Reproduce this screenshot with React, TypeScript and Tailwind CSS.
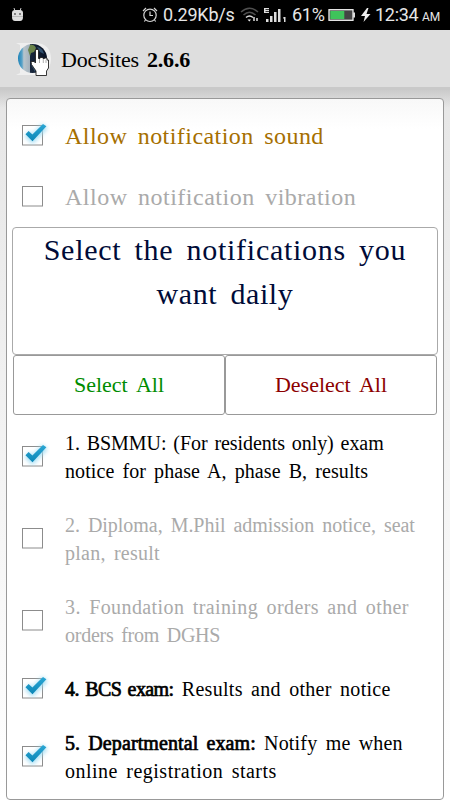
import React from 'react';

function Check({ on }: { on?: boolean }) {
  return (
    <svg className="-my-1 ml-[11px] h-[32px] w-[32px] shrink-0" viewBox="0 0 32 32">
      <defs>
        <linearGradient id="tick" x1="0" y1="0" x2="0" y2="1">
          <stop offset="0" stopColor="#2aa7d5" />
          <stop offset="1" stopColor="#0c86b6" />
        </linearGradient>
        <filter id="glow" x="-40%" y="-40%" width="180%" height="180%">
          <feGaussianBlur stdDeviation="2" />
        </filter>
      </defs>
      <rect x="4.5" y="5.500" width="20" height="19.500" fill="#fff" stroke="#8c8c8c" />
      {on && (
        <>
          <path d="M9 13.5 14.5 19 27 6" fill="none" stroke="#9edcf3" strokeWidth="7" filter="url(#glow)" opacity=".9" />
          <path d="M7.5 14.2 10.6 11 14.4 14.600 25 4 28.400 6.200 14.5 21.2Z" fill="url(#tick)" />
        </>
      )}
    </svg>
  );
}

function Row({ on, className, children }: { on?: boolean; className: string; children: React.ReactNode }) {
  return (
    <div className={`flex shrink-0 items-center ${className}`}>
      <Check on={on} />
      <div className="ml-[15px] flex flex-col whitespace-nowrap">{children}</div>
    </div>
  );
}

function StatusBar() {
  return (
    <div className="flex h-[30px] shrink-0 items-center bg-black font-[Roboto,sans-serif] text-[18px] leading-[30px] text-[#e6e6e6]">
      <svg className="ml-[11px] h-[16px] w-[13px]" viewBox="0 0 13 16">
        <path d="M3 1 4 4M10 1 9 4" stroke="#ccc" strokeWidth="1" />
        <path d="M1 6Q1 3 4 3H9Q12 3 12 6V10Q12 14 9 14H4Q1 14 1 10Z" fill="#ddd" />
        <path d="M1 9.5H12" stroke="#bbb" />
        <circle cx="4" cy="7" r=".9" fill="#555" />
        <circle cx="9" cy="7" r=".9" fill="#555" />
      </svg>
      <svg className="ml-[118px] h-[16px] w-[16px]" viewBox="0 0 16 16" fill="none" stroke="#d5d5d5" strokeWidth="1.2">
        <circle cx="8" cy="8.3" r="6.200" />
        <path d="M8 4.5V8.5H11M1 4 4 1M15 4 12 1M3.5 13 2.3 14.5M12.5 13 13.7 14.5" />
      </svg>
      <span className="ml-[5px] w-[72px] whitespace-nowrap tracking-[-0.2px]">0.29Kb/s</span>
      <svg className="ml-[5px] h-[16px] w-[20px]" viewBox="0 0 20 16" fill="none" strokeWidth="1.5">
        <path d="M1 5Q9.500-2.500 18 5M3.500 8Q9.500 2.500 15.500 8" stroke="#505050" />
        <path d="M6 10.500Q9.500 7.500 13 10.500" stroke="#ddd" />
        <path d="M7.500 12.500H11L9.300 14.500Z" fill="#eee" />
        <path d="M14 10V14M17 11V14" stroke="#ddd" />
      </svg>
      <svg className="ml-[4px] h-[16px] w-[23px]" viewBox="0 0 23 16" fill="#ddd">
        <path d="M0 1H5V2.200H1.500V3H5V4.200H1.500V5H5V6H0ZM2 12H4.500V15H2ZM6 9H8.500V15H6ZM10 5H12.500V15H10ZM14 2H16.500V15H14ZM19.500 10H21.500V15H20V11.500H19Z" />
      </svg>
      <span className="ml-[5px] w-[35px] whitespace-nowrap tracking-[-0.3px]">61%</span>
      <svg className="ml-[1px] h-[14px] w-[27px]" viewBox="0 0 27 14">
        <rect x="1" y="1.700" width="24" height="10.600" fill="#444" stroke="#eee" strokeWidth="1.300" />
        <rect x="2.300" y="3" width="14" height="8" fill="#3fc45b" />
        <path d="M25 4.500H27V9.500H25Z" fill="#ddd" />
      </svg>
      <svg className="ml-[6px] h-[16px] w-[10px]" viewBox="0 0 10 16">
        <path d="M6 1 0 9H4L2.500 15 9.500 7H5.500L7.500 1Z" fill="#eee" />
      </svg>
      <span className="ml-[4px] w-[47px] whitespace-nowrap tracking-[-0.3px]">12:34</span>
      <span className="pt-[4px] text-[12px]">AM</span>
    </div>
  );
}

function Logo() {
  return (
    <svg className="ml-[15px] h-[36px] w-[37px] shrink-0" viewBox="0 0 37 36">
      <defs>
        <linearGradient id="earth">
          <stop offset="0" stopColor="#1b82b8" />
          <stop offset=".14" stopColor="#5ba3c8" />
          <stop offset=".2" stopColor="#b9c5cc" />
          <stop offset=".4" stopColor="#a3b1bc" />
          <stop offset=".43" stopColor="#17263c" />
          <stop offset="1" stopColor="#0b1426" />
        </linearGradient>
      </defs>
      <path d="M1 2H20C31 2 36 8 36 18S29 34 19 34H1L5 32V4Z" fill="#efefef" />
      <circle cx="17.500" cy="17.500" r="14.500" fill="url(#earth)" />
      <path d="M15 4Q19 3 21 7L19 11 16 12 15 15 13 9Z" fill="#69834a" />
      <path d="M22 6Q28 7 29 13L25 11ZM16 24 21 27 20 31Z" fill="#31516f" />
      <path d="M20.500 8.500H23.500V17.500H25V16.500H28V17.500H29.500V17H32V19H33.500V27L31.500 30V34.500H21V30L16.500 23.500 16 20.500H19L20.500 22Z" fill="#fff" stroke="#222" strokeWidth=".9" />
      <path d="M24.500 18V22M28.300 18V22M31 19V22" stroke="#777" strokeWidth=".6" />
    </svg>
  );
}

export default function App() {
  return (
    <div className="flex h-[800px] w-[450px] flex-col overflow-hidden bg-gradient-to-b from-[#e3e3e3] to-white font-['Liberation_Serif',serif] text-black">
      <StatusBar />
      <header className="flex h-[60px] shrink-0 items-center border-b-[3px] border-[#c9c9c9] bg-[#dedede]">
        <Logo />
        <h1 className="ml-[9px] flex whitespace-nowrap pt-[2px] text-[22px] leading-[30px]">
          <span className="w-[86px] tracking-[-0.2px]">DocSites</span>
          <b className="tracking-[-0.2px]">2.6.6</b>
        </h1>
      </header>
      <main className="flex flex-1 flex-col bg-gradient-to-b from-[#cbcbcb] to-transparent to-[18px] px-[6px] pt-[8px]">
        <section className="flex h-[702px] w-[438px] flex-col rounded-[4px] border border-[#999] bg-gradient-to-b from-[#f8f8f8] to-white to-[30px] pt-[6px]">
          <Row on className="h-[61px] text-[24px] leading-[30px] tracking-[0.45px] text-[#a66f00] [word-spacing:4px]">
            <span>Allow notification sound</span>
          </Row>
          <Row className="h-[61px] text-[24px] leading-[30px] tracking-[0.5px] text-[#aaa] [word-spacing:4px]">
            <span>Allow notification vibration</span>
          </Row>
          <div className="ml-[5px] flex h-[128px] w-[426px] shrink-0 flex-col items-center whitespace-nowrap rounded-[4px] border border-[#aaa] text-[30px] leading-[44px] text-[#000b38] [word-spacing:5px]">
            <span className="tracking-[0.72px]">Select the notifications you</span>
            <span className="tracking-[0.6px]">want daily</span>
          </div>
          <div className="ml-[6px] flex h-[60px] w-[424px] shrink-0 text-[22px] leading-[30px] [word-spacing:4px]">
            <div className="flex w-[212px] items-center justify-center rounded-[3px] border border-[#999] text-[#008c00]">Select All</div>
            <div className="flex w-[212px] items-center justify-center rounded-[3px] border border-[#999] text-[#8c0000]">Deselect All</div>
          </div>
          <div className="flex flex-col text-[20px] leading-[28px] [word-spacing:3px]">
            <Row on className="h-[83px]">
              <span className="tracking-[-0.07px] [word-spacing:2px]">1. BSMMU: (For residents only) exam</span>
              <span className="tracking-[0.08px]">notice for phase A, phase B, results</span>
            </Row>
            <Row className="h-[82px] text-[#aaa]">
              <span className="tracking-[-0.03px]">2. Diploma, M.Phil admission notice, seat</span>
              <span className="tracking-[0.25px]">plan, result</span>
            </Row>
            <Row className="h-[82px] text-[#aaa]">
              <span className="tracking-[0.4px]">3. Foundation training orders and other</span>
              <span className="tracking-[-0.26px]">orders from DGHS</span>
            </Row>
            <Row on className="h-[54px]">
              <span className="tracking-[0.3px]">
                <b className="font-normal tracking-[-0.6px] [-webkit-text-stroke:0.7px_black] [word-spacing:2px]">4. BCS exam:</b> Results and other notice
              </span>
            </Row>
            <Row on className="h-[82px]">
              <span className="tracking-[0.2px]">
                <b className="font-normal tracking-[0.1px] [-webkit-text-stroke:0.7px_black]">5. Departmental exam:</b> Notify me when
              </span>
              <span className="tracking-[0.48px]">online registration starts</span>
            </Row>
          </div>
        </section>
      </main>
    </div>
  );
}
